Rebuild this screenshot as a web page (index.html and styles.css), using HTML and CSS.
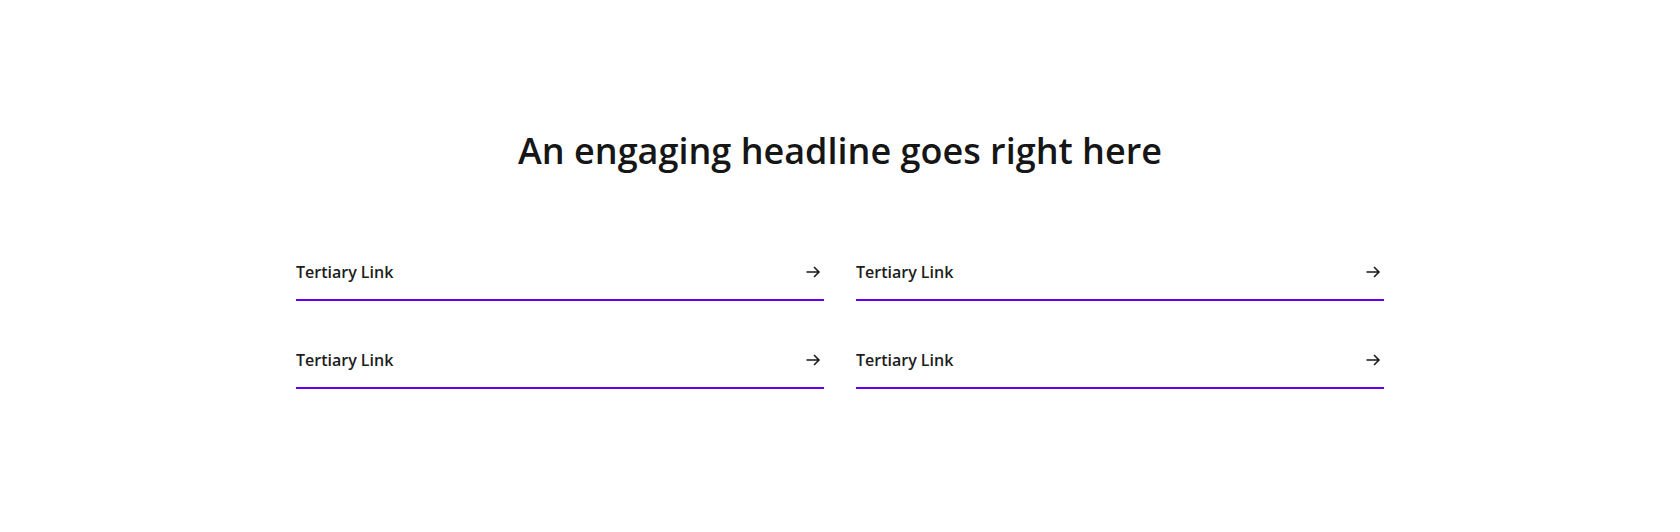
FILE: index.html
```
<!DOCTYPE html>
<html lang="en">
<head>
    <meta charset="UTF-8">
    <meta name="viewport" content="width=device-width, initial-scale=1.0">
    <title>Tertiary Links</title>
    <link rel="stylesheet" href="styles.css">
</head>
<body>
    <section class="link-block">
        <h1 class="headline">An engaging headline goes right here</h1>

        <div class="link-grid">
            <a class="tertiary-link" href="#">
                <span>Tertiary Link</span>
                <svg class="arrow" viewBox="0 0 16 16" width="16" height="16"><path d="M1.5 8H14M9 3l5 5-5 5"/></svg>
            </a>
            <a class="tertiary-link" href="#">
                <span>Tertiary Link</span>
                <svg class="arrow" viewBox="0 0 16 16" width="16" height="16"><path d="M1.5 8H14M9 3l5 5-5 5"/></svg>
            </a>
            <a class="tertiary-link" href="#">
                <span>Tertiary Link</span>
                <svg class="arrow" viewBox="0 0 16 16" width="16" height="16"><path d="M1.5 8H14M9 3l5 5-5 5"/></svg>
            </a>
            <a class="tertiary-link" href="#">
                <span>Tertiary Link</span>
                <svg class="arrow" viewBox="0 0 16 16" width="16" height="16"><path d="M1.5 8H14M9 3l5 5-5 5"/></svg>
            </a>
        </div>
    </section>
</body>
</html>
```

FILE: styles.css
```
* {
    margin: 0;
    padding: 0;
    box-sizing: border-box;
}

body {
    background: #ffffff;
    color: #161616;
    font-family: "Open Sans", "Noto Sans", sans-serif;
}

.link-block {
    display: flex;
    flex-direction: column;
    align-items: center;
    padding-top: 129px;
}

.headline {
    font-size: 36px;
    line-height: 44px;
    font-weight: 600;
    text-align: center;
    margin-bottom: 72px;
}

.link-grid {
    display: grid;
    grid-template-columns: 528px 528px;
    column-gap: 32px;
    row-gap: 32px;
}

.tertiary-link {
    display: flex;
    justify-content: space-between;
    align-items: center;
    height: 56px;
    padding: 17px 3px 17px 0;
    border-bottom: 2px solid #6200ee;
    color: #1c1c1c;
    text-decoration: none;
    font-size: 16px;
    line-height: 20px;
    font-weight: 600;
}

.arrow {
    fill: none;
    stroke: #161616;
    stroke-width: 1.5;
}
```
